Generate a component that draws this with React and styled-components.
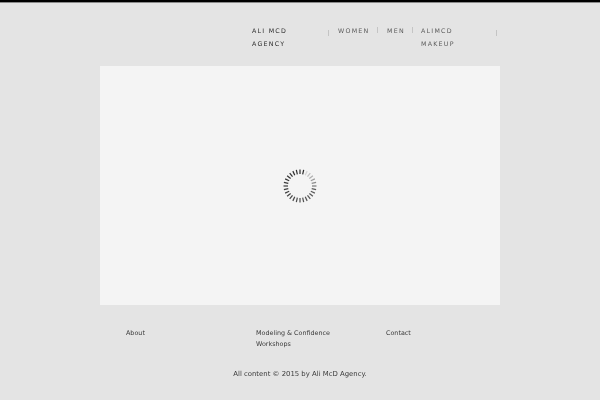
import React from 'react';
import styled, { createGlobalStyle } from 'styled-components';

const GlobalStyle = createGlobalStyle`
  html, body {
    margin: 0;
    padding: 0;
    background: #e4e4e4;
    font-family: "DejaVu Sans", sans-serif;
    text-rendering: geometricPrecision;
  }
`;

const Page = styled.div`
  width: 600px;
  height: 400px;
  overflow: hidden;
  border-top: 2px solid #000;
  box-sizing: border-box;
  will-change: transform;
`;

const Header = styled.header`
  height: 64px;
  padding: 24px 0 0 252px;
  box-sizing: border-box;
  display: flex;
  align-items: flex-start;
  box-shadow: inset 0 1px 0 #8a8a8a;
`;

const Brand = styled.a`
  width: 40px;
  margin-right: 36px;
  font-size: 6.3px;
  line-height: 12.5px;
  letter-spacing: 1.25px;
  color: #2c2c2c;
`;

const Nav = styled.nav`
  display: flex;
  align-items: flex-start;
`;

const NavItem = styled.a`
  display: block;
  width: ${p => p.$width}px;
  padding: 0 ${p => p.$gutter || 0}px 0 ${p => p.$inset || 9}px;
  box-sizing: border-box;
  font-size: 6.3px;
  line-height: 12.5px;
  letter-spacing: 1.25px;
  color: #5c5c5c;
`;

const Tick = styled.span`
  width: 1px;
  height: 6px;
  margin-top: ${p => (p.$low ? 4 : 1)}px;
  background: #c4c4c4;
`;

const Stage = styled.main`
  width: 400px;
  height: 239px;
  margin: 0 auto;
  background: #f4f4f4;
  display: flex;
  align-items: center;
  justify-content: center;
`;

const FooterNav = styled.div`
  margin: 23px 0 0 126px;
  display: grid;
  grid-template-columns: 130px 130px 80px;
`;

const FooterLink = styled.a`
  display: block;
  width: ${p => p.$width}px;
  font-size: 6.4px;
  line-height: 10.5px;
  color: #3a3a3a;
`;

const Copyright = styled.p`
  margin: 20px 0 0;
  text-align: center;
  font-size: 6.9px;
  line-height: 11px;
  color: #3a3a3a;
`;

const TICKS = 28;

const Spinner = () => (
  <svg width="36" height="36" viewBox="-18 -18 36 36">
    {Array.from({ length: TICKS }, (_, i) => {
      // fades out going round, the head sits just right of the top
      const k = (i + TICKS - 2) % TICKS;
      const shade = k < 6 ? 0.15 + (k / 6) * 0.5 : 0.7 + ((k - 6) / 22) * 0.25;
      return (
        <line
          key={i}
          x1="0"
          y1="-16.5"
          x2="0"
          y2="-12"
          stroke="#1a1a1a"
          strokeOpacity={shade}
          strokeWidth="1.2"
          transform={`rotate(${(i * 360) / TICKS})`}
        />
      );
    })}
  </svg>
);

export default function App() {
  return (
    <Page>
      <GlobalStyle />
      <Header>
        <Brand>ALI MCD AGENCY</Brand>
        <Nav>
          <Tick $low />
          <NavItem $width={48}>WOMEN</NavItem>
          <Tick />
          <NavItem $width={34}>MEN</NavItem>
          <Tick />
          <NavItem $width={83} $inset={8} $gutter={30}>ALIMCD MAKEUP</NavItem>
          <Tick $low />
        </Nav>
      </Header>
      <Stage>
        <Spinner />
      </Stage>
      <FooterNav>
        <FooterLink>About</FooterLink>
        <FooterLink $width={85}>Modeling &amp; Confidence Workshops</FooterLink>
        <FooterLink>Contact</FooterLink>
      </FooterNav>
      <Copyright>All content © 2015 by Ali McD Agency.</Copyright>
    </Page>
  );
}
